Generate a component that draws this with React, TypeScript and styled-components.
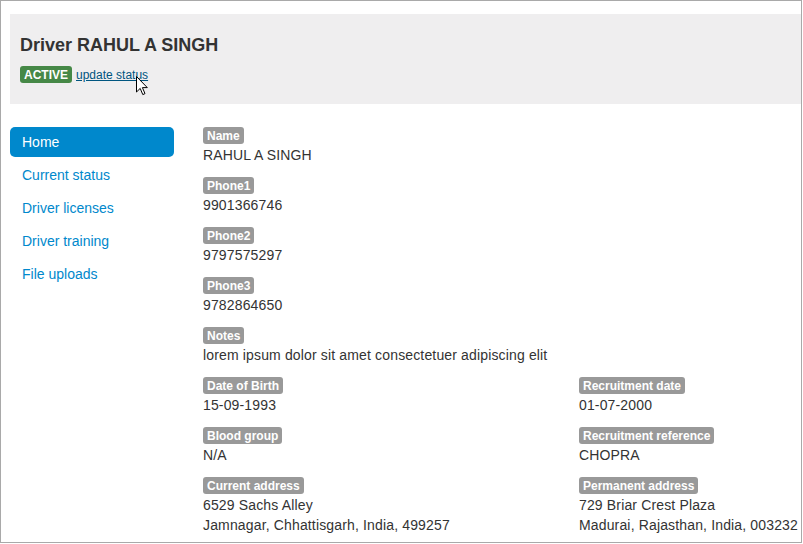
import React from 'react';
import styled, { createGlobalStyle } from 'styled-components';

const GlobalStyle = createGlobalStyle`
  html, body {
    margin: 0;
    padding: 0;
    background: #ffffff;
  }
  body {
    font-family: "Liberation Sans", Arial, sans-serif;
    font-size: 14px;
    line-height: 20px;
    color: #333333;
  }
`;

const Frame = styled.div`
  border: 1px solid #a9a9a9;
  box-sizing: border-box;
  height: 543px;
  overflow: hidden;
  padding: 13px 0 0 9px;
  position: relative;
  width: 802px;
`;

const Header = styled.div`
  background: #efeeef;
  box-sizing: border-box;
  height: 90px;
  padding: 21px 10px 0;
`;

const Title = styled.h3`
  color: #333333;
  font-size: 18px;
  font-weight: bold;
  line-height: 20px;
  margin: 0 0 11px;
`;

const StatusRow = styled.div`
  align-items: center;
  display: flex;
  gap: 4px;
  position: relative;
`;

const Badge = styled.span<{ $tone?: 'success' | 'muted' }>`
  background: ${(p) => (p.$tone === 'success' ? '#468847' : '#999999')};
  border-radius: 3px;
  color: #ffffff;
  display: inline-block;
  font-size: 12px;
  font-weight: bold;
  line-height: 14px;
  padding: 2px 4px 1px;
  vertical-align: top;
  white-space: nowrap;
`;

const StatusLink = styled.a`
  color: #005580;
  font-size: 12px;
  line-height: 14px;
  text-decoration: underline;
`;

const Cursor = styled.svg`
  left: 116px;
  position: absolute;
  top: 10px;
`;

const Main = styled.div`
  display: flex;
  gap: 29px;
  margin-top: 23px;
`;

const Nav = styled.ul`
  list-style: none;
  margin: 0;
  padding: 0;
  width: 164px;
`;

const NavItem = styled.li<{ $active?: boolean }>`
  background: ${(p) => (p.$active ? '#0088cc' : 'transparent')};
  border-radius: 5px;
  color: ${(p) => (p.$active ? '#ffffff' : '#0088cc')};
  height: 30px;
  line-height: 30px;
  margin-bottom: 3px;
  padding: 0 12px;
`;

const Content = styled.div`
  display: grid;
  grid-template-columns: 376px 1fr;
`;

const Field = styled.div<{ $wide?: boolean }>`
  grid-column: ${(p) => (p.$wide ? '1 / -1' : 'auto')};
  margin-bottom: 12px;
`;

const LabelRow = styled.div`
  height: 18px;
  line-height: 18px;
`;

const Value = styled.div`
  color: #333333;
  letter-spacing: 0.15px;
  line-height: 20px;
  white-space: nowrap;
`;

type Item = { label: string; lines: string[]; wide?: boolean };

const fields: Item[] = [
  { label: 'Name', lines: ['RAHUL A SINGH'], wide: true },
  { label: 'Phone1', lines: ['9901366746'], wide: true },
  { label: 'Phone2', lines: ['9797575297'], wide: true },
  { label: 'Phone3', lines: ['9782864650'], wide: true },
  { label: 'Notes', lines: ['lorem ipsum dolor sit amet consectetuer adipiscing elit'], wide: true },
  { label: 'Date of Birth', lines: ['15-09-1993'] },
  { label: 'Recruitment date', lines: ['01-07-2000'] },
  { label: 'Blood group', lines: ['N/A'] },
  { label: 'Recruitment reference', lines: ['CHOPRA'] },
  { label: 'Current address', lines: ['6529 Sachs Alley', 'Jamnagar, Chhattisgarh, India, 499257'] },
  { label: 'Permanent address', lines: ['729 Briar Crest Plaza', 'Madurai, Rajasthan, India, 003232'] },
];

const navItems = ['Home', 'Current status', 'Driver licenses', 'Driver training', 'File uploads'];

export default function App() {
  return (
    <>
      <GlobalStyle />
      <Frame>
        <Header>
          <Title>Driver RAHUL A SINGH</Title>
          <StatusRow>
            <Badge $tone="success">ACTIVE</Badge>
            <StatusLink href="#">update status</StatusLink>
            <Cursor width="12" height="20" viewBox="0 0 12 20">
              <path
                d="M0.5 0.5 L0.5 16 L4.2 12.4 L6.8 18.6 L9 17.6 L6.4 11.6 L11.3 11.6 Z"
                fill="#ffffff"
                stroke="#000000"
                strokeWidth="1"
                strokeLinejoin="round"
              />
            </Cursor>
          </StatusRow>
        </Header>
        <Main>
          <Nav>
            {navItems.map((n, i) => (
              <NavItem key={n} $active={i === 0}>
                {n}
              </NavItem>
            ))}
          </Nav>
          <Content>
            {fields.map((f) => (
              <Field key={f.label} $wide={f.wide}>
                <LabelRow>
                  <Badge>{f.label}</Badge>
                </LabelRow>
                {f.lines.map((l) => (
                  <Value key={l}>{l}</Value>
                ))}
              </Field>
            ))}
          </Content>
        </Main>
      </Frame>
    </>
  );
}
